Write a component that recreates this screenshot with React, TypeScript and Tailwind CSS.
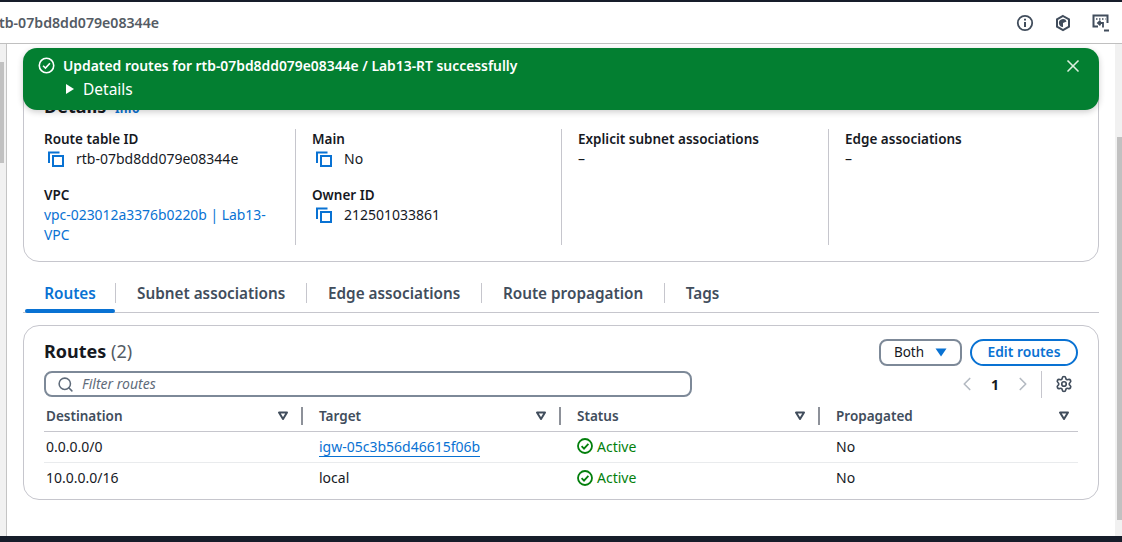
import { useState } from "react";
import { ChevronLeft, ChevronRight, Search, Settings, X } from "lucide-react";

const CopyIcon = () => (
  <svg width="18" height="18" viewBox="0 0 18 18" fill="none" className="shrink-0">
    <path d="M2 13V2.5h10.5" stroke="#0972d3" strokeWidth="2" />
    <rect x="6" y="6" width="10" height="10" stroke="#0972d3" strokeWidth="2" />
  </svg>
);

const ActiveIcon = () => (
  <svg width="16" height="16" viewBox="0 0 16 16" fill="none" className="shrink-0">
    <circle cx="8" cy="8" r="7" stroke="#037f0c" strokeWidth="1.8" />
    <path d="M4.6 8.2l2.4 2.4 4.4-4.8" stroke="#037f0c" strokeWidth="1.8" />
  </svg>
);

const SortCaret = () => (
  <svg width="12" height="10" viewBox="0 0 12 10" fill="none" className="shrink-0">
    <path d="M2 1.5h8L6 8z" stroke="#414d5c" strokeWidth="2" strokeLinejoin="round" />
  </svg>
);

const Field = ({ label, children }: { label: string; children: React.ReactNode }) => (
  <div>
    <div className="text-[13.5px] leading-[20px] font-semibold text-[#16191f]">{label}</div>
    {children}
  </div>
);

const CopyValue = ({ value }: { value: string }) => (
  <div className="flex items-center gap-[11px] pl-[3px] text-[14px] leading-[20px] text-[#16191f]">
    <CopyIcon />
    <span>{value}</span>
  </div>
);

const HeaderCell = ({ label, last, first }: { label: string; last?: boolean; first?: boolean }) => (
  <div className={first ? "flex items-center justify-between h-[20px] pl-[2px]" : "flex items-center justify-between h-[20px] pl-[16px]"}>
    <span className="text-[13.5px] font-semibold text-[#414d5c]">{label}</span>
    <div className="flex items-center">
      <SortCaret />
      {last ? <span className="w-[8px]" /> : <span className="w-[2px] h-[18px] bg-[#8d9199] ml-[12px]" />}
    </div>
  </div>
);

const tabs = ["Subnet associations", "Edge associations", "Route propagation", "Tags"];

export default function App() {
  const [showFlash, setShowFlash] = useState(true);

  return (
    <div className="relative w-[1122px] h-[542px] overflow-hidden bg-white flex flex-col font-['Noto_Sans',sans-serif]">
      <div className="h-[2px] bg-[#161d2a] shrink-0" />
      <header className="h-[42px] shrink-0 flex items-center justify-between border-b border-[#c0c0c0] pr-[12px]">
        <span className="text-[14.15px] font-semibold text-[#545b64] -ml-[1px]">tb-07bd8dd079e08344e</span>
        <div className="flex items-center gap-[20px]">
          <svg width="18" height="18" viewBox="0 0 18 18" fill="none">
            <circle cx="9" cy="9" r="7.2" stroke="#414d5c" strokeWidth="1.8" />
            <path d="M9 8v5M9 4.8v1.8" stroke="#414d5c" strokeWidth="2" />
          </svg>
          <svg width="18" height="18" viewBox="0 0 18 18" fill="none">
            <path d="M9 2l6 3.4v7.2L9 16l-6-3.4V5.4z" stroke="#414d5c" strokeWidth="2" />
            <path d="M9 9l3.6-1.6A4 4 0 1 0 9 13z" fill="#414d5c" />
          </svg>
          <svg width="18" height="18" viewBox="0 0 18 18" fill="none">
            <path d="M6 12.5H1.5V1.5h14V9" stroke="#414d5c" strokeWidth="2" />
            <path d="M4 5h1.5M7 5h1.5M10 5h1.5M13 5h.5" stroke="#414d5c" strokeWidth="1.5" />
            <path d="M6 9h5v4.5M8.5 6.8L6 9l2.5 2.2M12 16.5h5" stroke="#414d5c" strokeWidth="1.8" />
          </svg>
        </div>
      </header>

      <div className="flex-1 flex min-h-0">
        <div className="w-[7px] shrink-0 bg-[#f1f1f1] border-r border-[#c4c4c4] pt-[18px]">
          <div className="h-[101px] bg-[#c1c1c1] w-[4px]" />
        </div>

        <main className="flex-1 min-w-0 pl-[16px] pr-[16px]">
          <section className="relative h-[202px] mt-[16px] mb-[19px] border border-[#c6c6cd] rounded-[16px] pl-[20px] pt-[68px]">
            <h2 className="absolute left-[20px] top-[33px] text-[18px] leading-[24px] font-bold text-[#16191f]">
              Details <a className="text-[12px] font-bold text-[#0972d3] ml-[4px]">Info</a>
            </h2>
            <div className="grid grid-cols-[252px_266px_267px_1fr]">
              <div className="h-[116px] border-r border-[#c6c6cd] flex flex-col gap-[16px]">
                <Field label="Route table ID"><CopyValue value="rtb-07bd8dd079e08344e" /></Field>
                <Field label="VPC">
                  <a className="block w-[240px] text-[13.9px] leading-[20px] text-[#0972d3]">
                    vpc-023012a3376b0220b | Lab13-VPC
                  </a>
                </Field>
              </div>
              <div className="h-[116px] pl-[16px] border-r border-[#c6c6cd] flex flex-col gap-[16px]">
                <Field label="Main"><CopyValue value="No" /></Field>
                <Field label="Owner ID"><CopyValue value="212501033861" /></Field>
              </div>
              <div className="h-[116px] pl-[16px] border-r border-[#c6c6cd]">
                <Field label="Explicit subnet associations">
                  <div className="text-[14px] leading-[20px] text-[#16191f]">–</div>
                </Field>
              </div>
              <div className="h-[116px] pl-[16px]">
                <Field label="Edge associations">
                  <div className="text-[14px] leading-[20px] text-[#16191f]">–</div>
                </Field>
              </div>
            </div>
          </section>

          <nav className="flex items-start h-[32px] border-b border-[#c6c6cd] pt-[2px] relative">
            <div className="relative w-[92px] h-[20px] flex items-center justify-center pl-[2px]">
              <span className="text-[15.3px] font-semibold text-[#0972d3]">Routes</span>
            </div>
            <span className="absolute left-[2px] w-[90px] bottom-[-1px] h-[4px] rounded-[2px] bg-[#0972d3]" />
            {tabs.map((t) => (
              <div key={t} className="flex items-center h-[20px] border-l border-[#c6c6cd] pl-[21px] pr-[20.6px]">
                <span className="text-[15.3px] font-semibold text-[#414d5c]">{t}</span>
              </div>
            ))}
          </nav>

          <section className="mt-[12px] h-[175px] border border-[#c6c6cd] rounded-[16px] pl-[20px] pr-[20px] pt-[12px]">
            <div className="flex items-center justify-between h-[28px]">
              <h2 className="text-[18px] font-bold text-[#16191f] -mt-[2px]">
                Routes <span className="font-normal text-[#545b64]">(2)</span>
              </h2>
              <div className="flex items-center gap-[8px]">
                <button className="h-[27px] w-[83px] flex items-center justify-center gap-[11px] border-2 border-[#7d8998] rounded-[8px] text-[13.5px] text-[#16191f]">
                  Both
                  <svg width="12" height="9" viewBox="0 0 12 9"><path d="M0.5 0.5h11L6 8.5z" fill="#0972d3" /></svg>
                </button>
                <button className="h-[27px] w-[108px] border-2 border-[#0972d3] rounded-full text-[13.8px] font-semibold text-[#0972d3]">
                  Edit routes
                </button>
              </div>
            </div>

            <div className="flex items-center justify-between h-[28px] mt-[4px]">
              <div className="w-[648px] h-[26px] border-2 border-[#7d8998] rounded-[8px] flex items-center pl-[11px] gap-[8px]">
                <Search size={17} strokeWidth={2.2} className="text-[#5f6b7a]" />
                <span className="text-[14px] italic text-[#5f6b7a] -mt-[1px]">Filter routes</span>
              </div>
              <div className="flex items-center text-[#b4bac2]">
                <ChevronLeft size={22} strokeWidth={1.8} />
                <span className="w-[34px] text-center text-[14px] font-bold text-[#16191f]">1</span>
                <ChevronRight size={22} strokeWidth={1.8} />
                <span className="w-px h-[27px] bg-[#c6c6cd] ml-[7px]" />
                <Settings size={18} strokeWidth={2.2} className="text-[#414d5c] ml-[13px] mr-[5px]" />
              </div>
            </div>

            <div className="grid grid-cols-[259px_258px_259px_1fr] mt-[6px] h-[28px] border-b border-[#c6c6cd] pt-[2px]">
              <HeaderCell label="Destination" first />
              <HeaderCell label="Target" />
              <HeaderCell label="Status" />
              <HeaderCell label="Propagated" last />
            </div>

            <div className="grid grid-cols-[259px_258px_259px_1fr] h-[31px] pb-[2px] items-center border-b border-[#e9ebed] text-[14px] text-[#16191f]">
              <span className="pl-[2px]">0.0.0.0/0</span>
              <a className="pl-[16px]"><span className="text-[#0972d3] border-b border-[#0972d3]">igw-05c3b56d46615f06b</span></a>
              <span className="pl-[16px] flex items-center gap-[4px] text-[#037f0c]"><ActiveIcon />Active</span>
              <span className="pl-[16px]">No</span>
            </div>
            <div className="grid grid-cols-[259px_258px_259px_1fr] h-[31px] pb-[2px] items-center text-[14px] text-[#16191f]">
              <span className="pl-[2px]">10.0.0.0/16</span>
              <span className="pl-[16px]">local</span>
              <span className="pl-[16px] flex items-center gap-[4px] text-[#037f0c]"><ActiveIcon />Active</span>
              <span className="pl-[16px]">No</span>
            </div>
          </section>
        </main>

        <div className="w-[7px] shrink-0 bg-[#f1f1f1] flex flex-col items-end pt-[93px]">
          <div className="w-[5px] h-[383px] bg-[#c1c1c1]" />
        </div>
      </div>

      <div className="h-[6px] shrink-0 bg-[#161d2a]" />

      {showFlash && (
        <div className="absolute left-[23px] top-[48px] w-[1076px] h-[62px] rounded-[14px] bg-[#037f31] text-white shadow-[0_2px_6px_rgba(0,0,0,0.2)] flex items-start pl-[15px] pt-[9px]">
          <svg width="17" height="17" viewBox="0 0 16 16" fill="none" className="shrink-0">
            <circle cx="8" cy="8" r="6.8" stroke="white" strokeWidth="1.5" />
            <path d="M4.8 8.2l2.2 2.2 4.2-4.6" stroke="white" strokeWidth="1.5" />
          </svg>
          <div className="ml-[8px]">
            <div className="text-[13.88px] leading-[18px] font-semibold">
              Updated routes for rtb-07bd8dd079e08344e / Lab13-RT successfully
            </div>
            <div className="flex items-center gap-[9px] mt-[5px] ml-[3px] text-[15.5px] leading-[18px]">
              <svg width="8" height="10" viewBox="0 0 8 10"><path d="M0 0l8 5-8 5z" fill="white" /></svg>
              Details
            </div>
          </div>
          <button onClick={() => setShowFlash(false)} className="absolute right-[16px] top-[8px] text-[#dcefe0]">
            <X size={20} strokeWidth={2} />
          </button>
        </div>
      )}
    </div>
  );
}
